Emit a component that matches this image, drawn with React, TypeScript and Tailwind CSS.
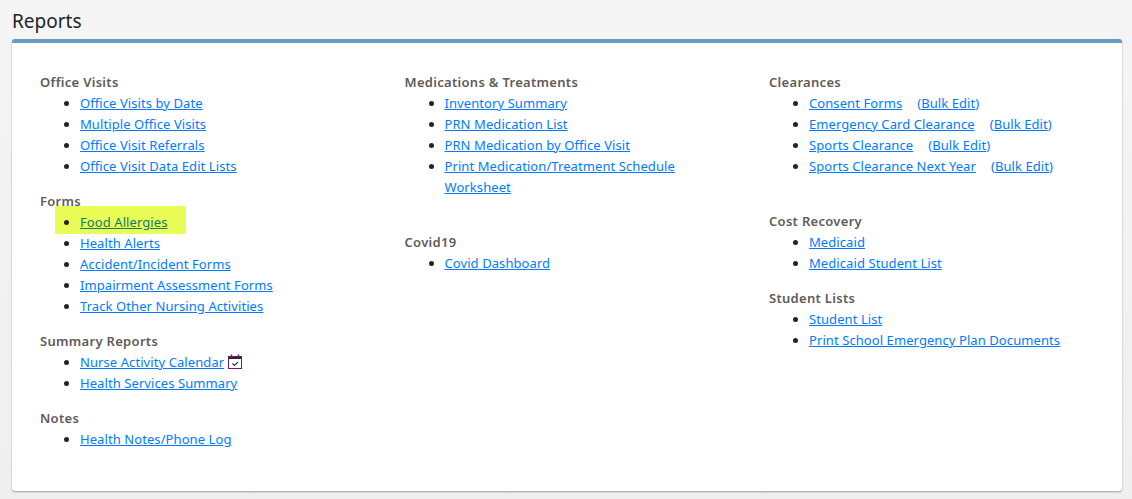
const font = { fontFamily: '"Noto Sans", sans-serif' };

type Item = { label: string; bulk?: boolean; cal?: boolean };
type Group = { title: string; items: Item[]; extra?: boolean };

const columns: Group[][] = [
  [
    {
      title: "Office Visits",
      items: [
        { label: "Office Visits by Date" },
        { label: "Multiple Office Visits" },
        { label: "Office Visit Referrals" },
        { label: "Office Visit Data Edit Lists" },
      ],
    },
    {
      title: "Forms",
      items: [
        { label: "Food Allergies" },
        { label: "Health Alerts" },
        { label: "Accident/Incident Forms" },
        { label: "Impairment Assessment Forms" },
        { label: "Track Other Nursing Activities" },
      ],
    },
    {
      title: "Summary Reports",
      items: [
        { label: "Nurse Activity Calendar", cal: true },
        { label: "Health Services Summary" },
      ],
    },
    { title: "Notes", items: [{ label: "Health Notes/Phone Log" }] },
  ],
  [
    {
      title: "Medications & Treatments",
      extra: true,
      items: [
        { label: "Inventory Summary" },
        { label: "PRN Medication List" },
        { label: "PRN Medication by Office Visit" },
        { label: "Print Medication/Treatment Schedule Worksheet" },
      ],
    },
    { title: "Covid19", items: [{ label: "Covid Dashboard" }] },
  ],
  [
    {
      title: "Clearances",
      extra: true,
      items: [
        { label: "Consent Forms", bulk: true },
        { label: "Emergency Card Clearance", bulk: true },
        { label: "Sports Clearance", bulk: true },
        { label: "Sports Clearance Next Year", bulk: true },
      ],
    },
    {
      title: "Cost Recovery",
      items: [{ label: "Medicaid" }, { label: "Medicaid Student List" }],
    },
    {
      title: "Student Lists",
      items: [
        { label: "Student List" },
        { label: "Print School Emergency Plan Documents" },
      ],
    },
  ],
];

function CalendarIcon() {
  return (
    <svg width="14" height="15" viewBox="0 0 14 15" className="ml-1 inline-block align-[-2px]" fill="none">
      <rect x="0.5" y="2.5" width="13" height="12" stroke="#6b1a7a" />
      <rect x="1" y="3" width="12" height="2" fill="#2b2b2b" />
      <path d="M3.5 0.5v3M10.5 0.5v3" stroke="#6b1a7a" strokeWidth="1.4" />
      <path d="M4.5 9.5l2 2 3.5-3.5" stroke="#333" strokeWidth="1.1" />
    </svg>
  );
}

export default function App() {
  return (
    <div className="h-[499px] overflow-hidden bg-gradient-to-b from-[#f5f5f5] to-[#efefef] px-3 text-[#212529]" style={font}>
      <h1 className="h-[39px] pt-[6px] text-[19px] leading-[30px]">Reports</h1>
      <div className="relative h-[452px] w-[1110px] rounded-[3px] border-t-4 border-[#6a9bc0] bg-white px-7 pt-[29px] shadow-[0_1px_2px_rgba(0,0,0,0.35)]">
        <div className="absolute left-[43px] top-[163px] h-[28px] w-[131px] bg-[#eafc56]" />
        <div className="relative grid grid-cols-[324.5px_324.5px_1fr] gap-x-10 text-[13px] leading-[21px] tracking-[0.08px]">
          {columns.map((col) => (
            <div key={col[0].title}>
              {col.map((g) => (
                <div key={g.title} className={g.extra ? "mb-[34px]" : "mb-[14px]"}>
                  <div className="font-semibold tracking-[0.3px] text-[#5f5b57]">{g.title}</div>
                  <ul className="list-disc pl-10 marker:text-[#212529]">
                    {g.items.map((it) => (
                      <li key={it.label}>
                        <a href="#" className={it.label === "Food Allergies" ? "text-[#0a7d6c] underline" : "text-[#007bff] underline"}>
                          {it.label}
                        </a>
                        {it.cal && <CalendarIcon />}
                        {it.bulk && (
                          <a href="#" className="ml-[15px] text-[#007bff]">
                            (<span className="underline">Bulk Edit</span>)
                          </a>
                        )}
                      </li>
                    ))}
                  </ul>
                </div>
              ))}
            </div>
          ))}
        </div>
      </div>
    </div>
  );
}
